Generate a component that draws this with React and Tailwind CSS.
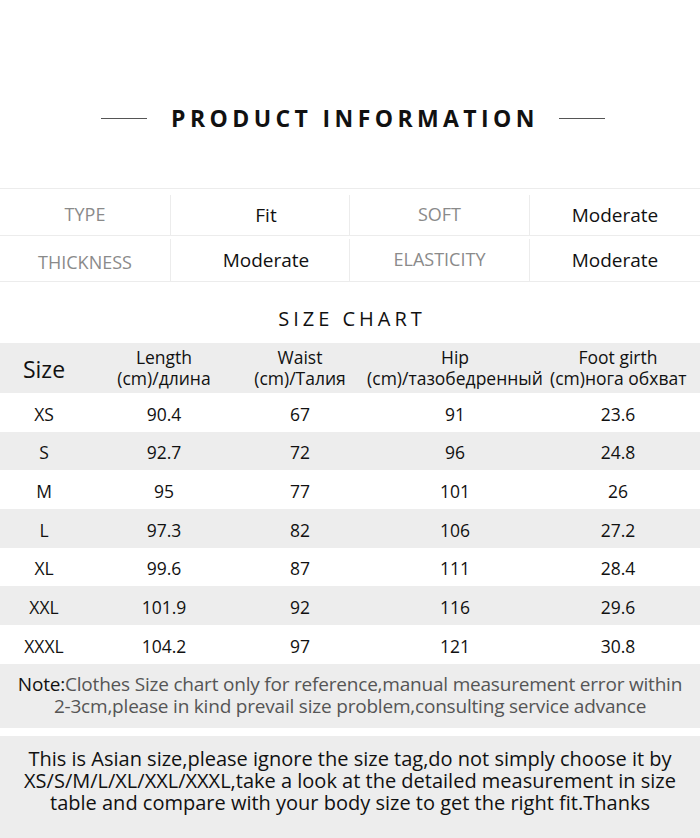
import React from 'react';

const info = [
  ['TYPE', 'Fit', 'SOFT', 'Moderate'],
  ['THICKNESS', 'Moderate', 'ELASTICITY', 'Moderate'],
];

const sizes = [
  ['XS', '90.4', '67', '91', '23.6'],
  ['S', '92.7', '72', '96', '24.8'],
  ['M', '95', '77', '101', '26'],
  ['L', '97.3', '82', '106', '27.2'],
  ['XL', '99.6', '87', '111', '28.4'],
  ['XXL', '101.9', '92', '116', '29.6'],
  ['XXXL', '104.2', '97', '121', '30.8'],
];

const cols = 'grid grid-cols-[88px_152px_120px_190px_136px]';

export default function App() {
  return (
    <div className="w-[700px] h-[838px] bg-white text-[#111] font-['Open_Sans','Noto_Sans',sans-serif] overflow-hidden">
      <div className="h-[188px] flex items-start justify-center pt-[103px] pl-[6px]">
        <div className="flex items-center gap-[24px]">
          <span className="w-[46px] h-px bg-[#555]" />
          <h1 className="text-[23px] font-bold tracking-[4.4px] leading-[30px] mr-[-4px]">PRODUCT INFORMATION</h1>
          <span className="w-[46px] h-px bg-[#555]" />
        </div>
      </div>

      <div className="border-t border-[#ececec]">
        {info.map((row, r) => (
          <div
            key={row[0]}
            className={`grid grid-cols-[171px_179px_180px_170px] h-[46.5px] border-b border-[#ececec] ${r === 0 ? 'pt-[6px]' : 'pt-[3px]'}`}
          >
            {row.map((cell, i) => (
              <div
                key={i}
                className={`flex items-center justify-center ${i < 3 ? 'border-r border-[#ececec]' : ''} ${i % 2 === 0 ? 'text-[#8a8a8a] text-[18px]' : 'text-[#111] text-[19px]'} ${i === 1 ? 'pl-[12px]' : ''} ${cell === 'THICKNESS' ? 'pt-[6px]' : ''}`}
              >
                {cell}
              </div>
            ))}
          </div>
        ))}
      </div>

      <div className="h-[61px] flex items-center justify-center pt-[12px]">
        <h2 className="text-[20px] tracking-[4px] mr-[-4px]">SIZE CHART</h2>
      </div>

      <div className={`${cols} h-[50px] bg-[#ededed] items-center text-center text-[17.5px] leading-[21px]`}>
        <div className="text-[23px] pt-[2px]">Size</div>
        <div>Length<br />(cm)/длина</div>
        <div>Waist<br />(cm)/Талия</div>
        <div className="whitespace-nowrap">Hip<br />(cm)/тазобедренный</div>
        <div className="whitespace-nowrap">Foot girth<br />(cm)нога обхват</div>
      </div>

      {sizes.map((r, idx) => (
        <div key={r[0]} className={`${cols} h-[38.7px] items-center text-center text-[17.5px] pt-[3px] ${idx % 2 ? 'bg-[#ededed]' : 'bg-white'}`}>
          {r.map((c, i) => (
            <div key={i}>{c}</div>
          ))}
        </div>
      ))}

      <div className="h-[64px] bg-[#ededed] flex items-center justify-center text-center text-[19px] leading-[22px] text-[#555] tracking-[-0.2px] pb-[2px]">
        <p className="px-[10px]">
          <span className="text-[#111]">Note:</span>Clothes Size chart only for reference,manual measurement error within 2-3cm,please in kind prevail size problem,consulting service advance
        </p>
      </div>

      <div className="h-[8px] bg-white" />

      <div className="h-[102px] bg-[#ededed] flex items-start justify-center text-center pt-[12px]">
        <p className="text-[20px] leading-[22px] px-[18px] text-[#111]">
          This is Asian size,please ignore the size tag,do not simply choose it by XS/S/M/L/XL/XXL/XXXL,take a look at the detailed measurement in size table and compare with your body size to get the right fit.Thanks
        </p>
      </div>
    </div>
  );
}
